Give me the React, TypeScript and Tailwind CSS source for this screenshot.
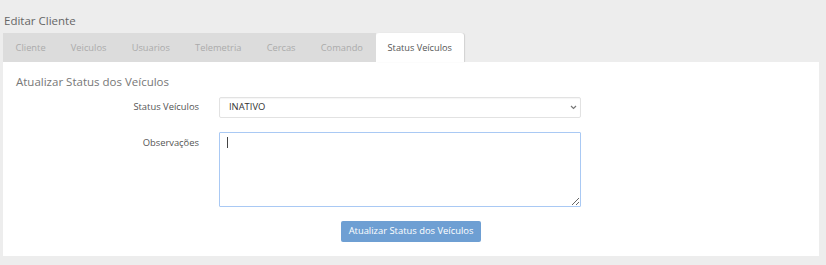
const tabs = ["Cliente", "Veiculos", "Usuarios", "Telemetria", "Cercas", "Comando", "Status Veículos"];

export default function App() {
  const active = "Status Veículos";

  return (
    <div
      className="h-[265px] w-[826px] overflow-hidden bg-[#ededed] pl-[3px] pr-[7px]"
      style={{ fontFamily: '"Open Sans", "Liberation Sans", sans-serif' }}
    >
      <h1 className="pl-[1px] pt-[13px] text-[11.5px] leading-[16px] text-[#666]">Editar Cliente</h1>

      <div className="mt-[4px] flex h-[29px] w-fit">
        {tabs.map((tab) =>
          tab === active ? (
            <div
              key={tab}
              className="flex items-center rounded-t-[3px] bg-white px-[12px] text-[9.2px] text-[#555] shadow-[1px_0_1px_rgba(0,0,0,0.12)]"
            >
              {tab}
            </div>
          ) : (
            <div key={tab} className="flex items-center bg-[#dcdcdc] px-[12.6px] text-[9.3px] text-[#ababab]">
              {tab}
            </div>
          )
        )}
      </div>

      <div className="h-[194px] bg-white pt-[12px]">
        <h2 className="pl-[13px] text-[11.5px] leading-[16px] text-[#777]">Atualizar Status dos Veículos</h2>

        <div className="mt-[7px] grid grid-cols-[216px_362px] gap-y-[14px]">
          <label className="flex h-[21px] items-center justify-end pr-5 text-[9.4px] text-[#555]">Status Veículos</label>
          <div className="relative h-[21px]">
            <select className="block h-[21px] w-full appearance-none rounded-[2px] border border-[#e2e2e2] bg-white pl-[9px] text-[9.4px] text-[#333] outline-none shadow-[inset_0_1px_1px_rgba(0,0,0,0.04)]">
              <option>INATIVO</option>
            </select>
            <svg
              className="pointer-events-none absolute right-[4px] top-[8px] h-[5px] w-[7px]"
              viewBox="0 0 7 5"
              fill="none"
              stroke="#777"
              strokeWidth="1.2"
            >
              <path d="M1 1l2.5 2.5L6 1" />
            </svg>
          </div>

          <label className="pr-5 pt-[4px] text-right text-[9.4px] leading-[14px] text-[#555]">Observações</label>
          <div className="relative h-[75px]">
            <textarea className="block h-[75px] w-full rounded-[1px] border border-[#a9c9f4] bg-white outline-none" />
            <span className="pointer-events-none absolute left-[8px] top-[5px] h-[11px] w-px bg-[#444]" />
          </div>
        </div>

        <div className="mt-[14px] flex justify-center">
          <button className="h-[21px] rounded-[2px] bg-[#6e9fd3] px-[8px] text-[9.4px] text-white">
            Atualizar Status dos Veículos
          </button>
        </div>
      </div>
    </div>
  );
}
